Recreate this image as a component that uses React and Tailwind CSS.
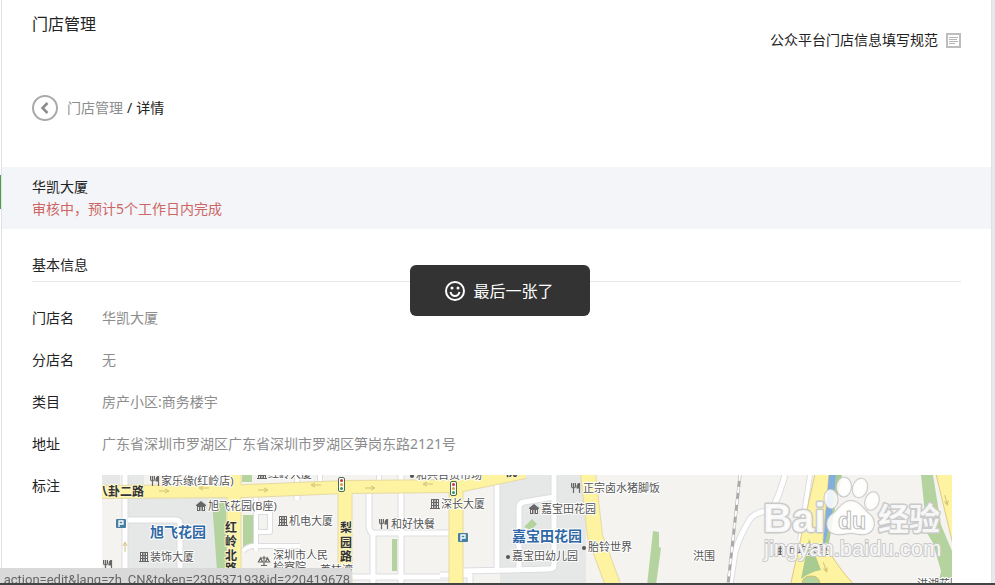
import React from "react";

const fields = [
  ["门店名", "华凯大厦"],
  ["分店名", "无"],
  ["类目", "房产小区:商务楼宇"],
  ["地址", "广东省深圳市罗湖区广东省深圳市罗湖区笋岗东路2121号"],
];

const places = [
  [161, 485, "家乐缘(红岭店)"],
  [268, 478, "红岭大厦", "building"],
  [416, 479, "和兴百货市场", "dot"],
  [208, 510, "旭飞花园(B座)", "house"],
  [289, 525, "机电大厦", "building"],
  [150, 561, "装饰大厦", "building"],
  [273, 559, "深圳市人民", "scales"],
  [273, 571, "检察院"],
  [320, 574, "荔枝湾"],
  [391, 528, "和好快餐", "food"],
  [441, 508, "深长大厦", "building"],
  [583, 492, "正宗卤水猪脚饭", "food"],
  [541, 513, "嘉宝田花园", "house"],
  [512, 560, "嘉宝田幼儿园", "dot"],
  [588, 551, "胎铃世界", "dot"],
  [693, 560, "洪围"],
  [785, 554, "市政大厦", "building"],
  [917, 588, "洪湖花园"],
];

function PlaceIcon({ kind, x, y }) {
  if (kind === "dot") return <circle cx={x - 4} cy={y - 3} r="2" fill="#555" />;
  if (kind === "building")
    return (
      <g transform={`translate(${x - 11} ${y - 9})`} fill="#666">
        <path d="M1 0h8v10H1z" />
        <path fill="#eee" d="M2 1h1v2H2zM4.500 1h1v2h-1zM7 1h1v2H7zM2 4h1v2H2zM4.500 4h1v2h-1zM7 4h1v2H7zM2 7h1v2H2zM4.500 7h1v2h-1zM7 7h1v2H7z" />
        <path d="M0 9h10v1H0z" />
      </g>
    );
  if (kind === "house")
    return (
      <g transform={`translate(${x - 12} ${y - 9})`} fill="#666">
        <path d="M5 0L0 4v1h10V4zM1 5h8v5H1z" />
        <path fill="#eee" d="M2 6h1v3H2zM4.500 6h1v4h-1zM7 6h1v3H7z" />
      </g>
    );
  if (kind === "food")
    return (
      <g transform={`translate(${x - 12} ${y - 9})`} fill="none" stroke="#666" strokeWidth="1.200">
        <path d="M.6 0v3.500q0 1.500 1.900 1.500t1.900-1.500V0M2.500 0v10" />
        <path d="M8.500 0v10M8 .5Q6 1 6 5h2" fill="#666" />
      </g>
    );
  if (kind === "scales")
    return (
      <g transform={`translate(${x - 15} ${y - 3})`} fill="none" stroke="#666" strokeWidth="1.200">
        <path d="M6 0v9M2 2h8M3 9.500h6M2.500 2L.5 6h4zM9.500 2l-2 4h4z" />
      </g>
    );
  return null;
}

function Parking({ x, y }) {
  return (
    <g transform={`translate(${x} ${y})`}>
      <rect width="10" height="9" rx="1" fill="#467f9f" />
      <path d="M3 8V2h4v3H3" fill="none" stroke="#fff" strokeWidth="1.300" />
    </g>
  );
}

function TrafficLight({ x, y }) {
  return (
    <g transform={`translate(${x} ${y})`}>
      <rect x=".5" y=".5" width="6" height="14" rx="1.500" fill="#fff" stroke="#4c6a4c" />
      <circle cx="3.500" cy="3.500" r="1.500" fill="#c33" />
      <circle cx="3.500" cy="7.500" r="1.500" fill="#d9a03a" />
      <circle cx="3.500" cy="11.500" r="1.500" fill="#2c9a50" />
    </g>
  );
}

function Arrow({ x, y, turn = 0 }) {
  return (
    <path
      d="M-5 0h9M1 -2l4 2-4 2"
      transform={`translate(${x} ${y}) rotate(${turn})`}
      fill="none"
      stroke="#d3c27a"
    />
  );
}

function Roads({ d, width = 5 }) {
  return (
    <g fill="none" strokeLinejoin="round">
      <path d={d} stroke="#dcdde1" strokeWidth={width + 2} />
      <path d={d} stroke="#fff" strokeWidth={width} />
    </g>
  );
}

function StoreMap() {
  return (
    <svg
      role="img"
      aria-label="门店位置地图"
      viewBox="102 475 850 110"
      preserveAspectRatio="xMinYMin slice"
      className="block h-[110px] w-full font-['Noto_Sans','Noto_Sans_CJK_SC',sans-serif]"
    >
      <rect x="102" y="475" width="850" height="110" fill="#f4f3f0" />
      <path d="M102 475h18v11h-18zM127 475h17v11h-17zM128 497h98v88h-98z" fill="#e5e8e6" />
      <path d="M500 481l18-6h68v110h-86z" fill="#e5e8e6" />
      <path d="M212 500h14l2 85h-10zM243 515h10v30l-10 5zM242 475h10v7h-10z" fill="#b5d39f" />
      <path d="M392 539h5v32h-5zM524 527l8-8 5 5-6 6zM653 531l6 1 0 15 2 1-5 37h-9z" fill="#b5d39f" />

      <Roads d="M125 475v110M128 520h48q4 0 4 4v61" />
      <Roads d="M256 494v57M256 512h14v20h-14M243 551q6-6 14-5h43M297 475v25M320 475v10M379 475v10" width={4} />
      <Roads d="M369 490v35q0 6 4 9v51M401 475v110M373 533h76M352 577h97M297 490v10" />
      <Roads d="M497 475v95M554 475v90q0 4-5 4l-86 2M519 570v-62q0-5 5-6l30-5M440 575h30v10" />
      <Roads d="M785 475q-8 28-15 36-13 0-20 8-10 16-15 33l-5 33" />
      <Roads d="M810 475l-4 26-6 40" width={4} />

      <g fill="none" stroke="#e6d9a4">
        <path d="M102 492L245 491 345 487 458 486 525 472" strokeWidth="14" />
        <path d="M234 475v110M345 490v95M456 484v101" strokeWidth="15" />
        <path d="M588 473l7 63 18 49" strokeWidth="16" />
      </g>
      <g fill="none" stroke="#fdf3a0">
        <path d="M102 492L245 491 345 487 458 486 525 472" strokeWidth="12" />
        <path d="M234 475v110M345 490v95M456 484v101" strokeWidth="13" />
        <path d="M588 473l7 63 18 49" strokeWidth="14" />
      </g>
      <g fill="#fdf3a0" stroke="#ddc98a">
        <path d="M815 474h14l-6 66q10 22 33 47h-66z" />
        <path d="M936 474h18v75z" />
      </g>
      <path d="M829 475h6l2 0-4 36-6 30-4 3z" fill="#82addf" />
      <path d="M836 475h6l-8 38-5 30h-4l7-31zM809 539l12 31q-11 2-20 9z" fill="#a9cb91" />
      <path d="M802 585q0-9 9-9t9 9" fill="#b5d39f" stroke="#cfbd70" />
      <path d="M921 475h12l8 50 11 26v34h-14l3-14-8-28-6-10z" fill="#b5d39f" />

      <path d="M740 475l-6 55-6 55" stroke="#aaa" strokeWidth="3" fill="none" />
      <path d="M740 475l-6 55-6 55" stroke="#fff" strokeWidth="2" strokeDasharray="6 6" fill="none" />

      <Arrow x={164} y={491} />
      <Arrow x={204} y={488} turn={180} />
      <Arrow x={263} y={490} />
      <Arrow x={316} y={485} turn={180} />
      <Arrow x={370} y={488} />
      <Arrow x={428} y={484} turn={180} />
      <Arrow x={125} y={547} turn={-90} />
      <Arrow x={946} y={500} turn={75} />
      <Arrow x={825} y={567} turn={70} />
      <TrafficLight x={338} y={477} />
      <TrafficLight x={450} y={481} />
      <Parking x={116} y={519} />
      <Parking x={458} y={533} />
      <PlaceIcon kind="food" x={162} y={485} />
      <PlaceIcon kind="food" x={115} y={569} />

      <g fontSize="11" fill="#555" stroke="#fff" strokeWidth="2" paintOrder="stroke" strokeLinejoin="round">
        {places.map(([x, y, name]) => (
          <text key={name + x} x={x} y={y}>{name}</text>
        ))}
      </g>
      {places.map(([x, y, name, kind]) => (
        <PlaceIcon key={name + x} kind={kind} x={x} y={y} />
      ))}
      <g fontSize="12" fontWeight="700" fill="#333" stroke="#fcf6c8" strokeWidth="2" paintOrder="stroke">
        <text x="96" y="496">八卦二路</text>
        <text x="505" y="476">桃</text>
        <text x="225" y="532">红</text>
        <text x="225" y="546">岭</text>
        <text x="225" y="560">北</text>
        <text x="225" y="573">路</text>
        <text x="340" y="532">梨</text>
        <text x="340" y="547">园</text>
        <text x="340" y="561">路</text>
      </g>
      <g fontSize="14" fontWeight="700" fill="#2e67a5" stroke="#fff" strokeWidth="2" paintOrder="stroke" strokeLinejoin="round">
        <text x="150" y="537">旭飞花园</text>
        <text x="512" y="541">嘉宝田花园</text>
      </g>

      <g fill="#fff" fillOpacity=".85" stroke="#cacaca" strokeWidth="3" paintOrder="stroke" strokeLinejoin="round">
        <g fontWeight="700">
          <text x="763" y="532" fontSize="40" className="font-['Liberation_Sans',sans-serif]">Bai</text>
          <text x="878" y="530" fontSize="31">经验</text>
        </g>
        <g strokeWidth="2">
          <ellipse cx="831" cy="499" rx="6.500" ry="9" transform="rotate(-8 831 499)" />
          <ellipse cx="844" cy="487" rx="7" ry="9.500" transform="rotate(4 844 487)" />
          <ellipse cx="860" cy="488" rx="7" ry="9.500" transform="rotate(16 860 488)" />
          <ellipse cx="872" cy="501" rx="6.500" ry="9" transform="rotate(20 872 501)" />
          <path d="M851 501c8 0 11 7 18 13 7 5 7 18-4 20-6 1-8-1-14-1s-9 2-15 1c-11-2-11-15-3-20 7-6 10-13 18-13z" />
          <text x="764" y="556" fontSize="22" className="font-['Liberation_Sans',sans-serif]">jingyan.baidu.com</text>
        </g>
      </g>
      <text x="838" y="529" fontSize="23" fontWeight="700" fill="#fff" stroke="#bbb" className="font-['Liberation_Sans',sans-serif]">du</text>
    </svg>
  );
}

export default function App() {
  return (
    <div className="flex h-screen overflow-hidden bg-[#e7e8ec] pr-[3px] font-['Noto_Sans','Noto_Sans_CJK_SC',sans-serif] text-sm leading-[22px] text-[#222]">
      <div className="w-px shrink-0 bg-white pt-[175px]">
        <div className="h-[34px] bg-[#44a24a]" />
      </div>
      <main className="min-w-0 flex-1 border-x border-[#e0e1e5] bg-white">
        <header className="flex justify-between px-[30px]">
          <h1 className="pt-3 text-base leading-6">门店管理</h1>
          <a href="#guide" className="flex items-center gap-2 pt-[29px]">
            公众平台门店信息填写规范
            <svg width="15" height="15" viewBox="0 0 15 15" fill="none" stroke="#b4b4b4" aria-hidden="true">
              <rect x="1" y="1" width="13" height="13" strokeWidth="2" stroke="#bdbdbd" />
              <path d="M3 4.500h9M3 6.500h8M3 8.500h9M3 10.500h6" />
            </svg>
          </a>
        </header>

        <nav className="flex items-center px-[30px] pt-11">
          <button type="button" aria-label="返回" className="mr-[9px] h-[26px] w-[26px]">
            <svg width="26" height="26" viewBox="0 0 26 26" fill="none" stroke="#aaa" aria-hidden="true">
              <circle cx="13" cy="13" r="12" strokeWidth="2" />
              <path d="M15.500 8l-5 5 5 5" stroke="#8c8c8c" strokeWidth="2.500" />
            </svg>
          </button>
          <a href="#stores" className="text-[#8d8d8d]">门店管理</a>
          <span className="px-1">/</span>
          <span>详情</span>
        </nav>

        <section className="mt-[46px] bg-[#f4f5f9] px-[30px] py-[9px]">
          <h2>华凯大厦</h2>
          <p className="text-[#cc6664]">审核中，预计5个工作日内完成</p>
        </section>

        <section className="px-[30px] pt-[25px]">
          <h3 className="border-b border-[#e7e7eb] pb-[5px]">基本信息</h3>
          <dl className="mt-[25px] flex flex-col gap-5">
            {fields.map(([label, value]) => (
              <div key={label} className="flex">
                <dt className="w-[70px] shrink-0">{label}</dt>
                <dd className="text-[#8d8d8d]">{value}</dd>
              </div>
            ))}
            <div className="flex">
              <dt className="w-[70px] shrink-0">标注</dt>
              <dd className="min-w-0 flex-1 pr-[9px]">
                <StoreMap />
              </dd>
            </div>
          </dl>
        </section>
      </main>

      <div className="pointer-events-none fixed inset-x-0 top-[265px] flex justify-center pl-1">
        <div
          role="status"
          className="flex h-[51px] w-[180px] items-center justify-center gap-2 rounded-md bg-[#333] text-base text-white"
        >
          <svg width="20" height="20" viewBox="0 0 20 20" fill="none" stroke="#fff" strokeWidth="2" aria-hidden="true">
            <circle cx="10" cy="10" r="9" />
            <path d="M5.500 11q1 4 4.500 4t4.500-4" />
            <circle cx="7" cy="7" r="1.500" fill="#fff" stroke="none" />
            <circle cx="13" cy="7" r="1.500" fill="#fff" stroke="none" />
          </svg>
          最后一张了
        </div>
      </div>

      <div className="fixed bottom-0 left-0 flex h-[17px] w-[352px] justify-end overflow-hidden rounded-tr-sm bg-[#d9d9d9] pr-0.5 font-['Roboto',sans-serif] text-[13px] leading-6 text-[#666]">
        action=edit&amp;lang=zh_CN&amp;token=230537193&amp;id=220419678
      </div>
      <div className="fixed inset-x-0 bottom-0 h-0.5 bg-[#444]" />
    </div>
  );
}
